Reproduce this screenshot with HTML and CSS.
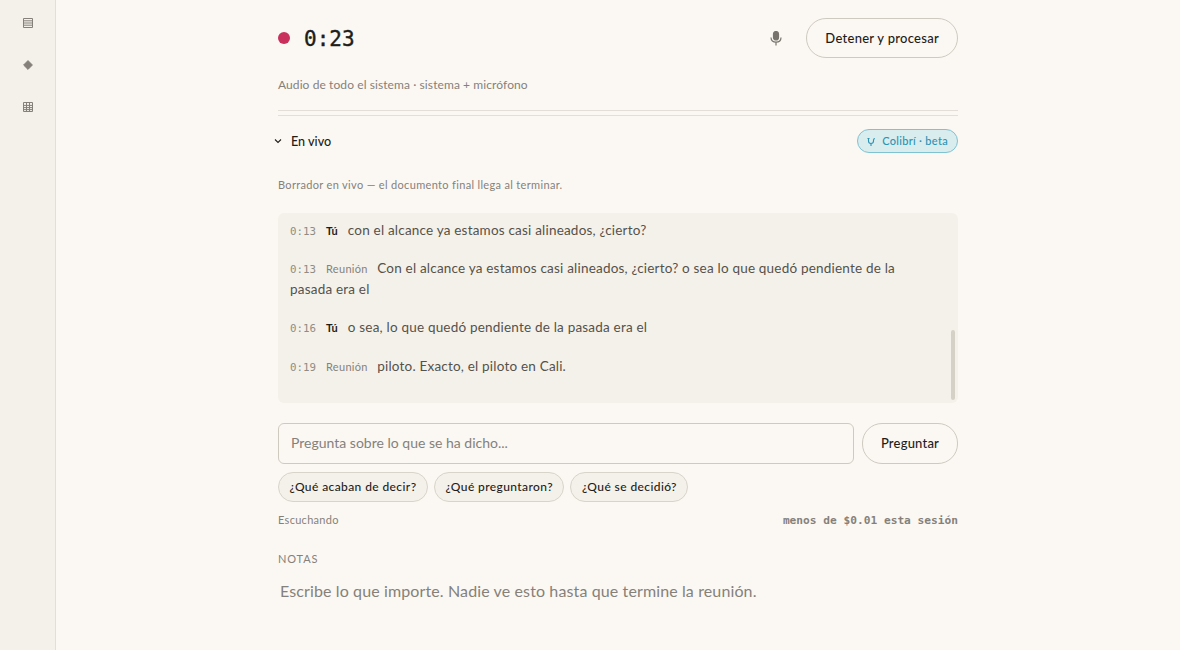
FILE: index.html
```html
<!DOCTYPE html>
<html lang="es">
  <head>
    <meta charset="UTF-8" />
    <meta name="viewport" content="width=device-width, initial-scale=1.0" />
    <title>Grabando</title>
    <link rel="stylesheet" href="styles.css">
  </head>
  <body>
    <aside class="sidebar">
      <svg class="nav-icon" viewBox="0 0 10 10"><path d="M.5.5h9v9h-9zM.5 2.800h9M.5 5h9M.5 7.200h9" /></svg>
      <svg class="nav-icon" viewBox="0 0 10 10"><path class="solid" d="M5 .6 9.400 5 5 9.400.6 5z" /></svg>
      <svg class="nav-icon" viewBox="0 0 10 10"><path d="M.5.5h9v9h-9zM.5 3.400h9M.5 5.600h9M.5 7.600h9M3.500.5v9M6.500.5v9" /></svg>
    </aside>

    <main class="container">
      <header class="rec-bar">
        <span class="rec-dot"></span>
        <span class="timer">0:23</span>
        <svg class="mic" viewBox="0 0 12 15">
          <rect x="3.500" y="0.5" width="5" height="8.500" rx="2.500" />
          <path d="M1 6.500c0 3 2 4.700 5 4.700s5-1.700 5-4.700M6 11.200v3.300" />
        </svg>
        <button class="btn stop">Detener y procesar</button>
      </header>

      <p class="source">Audio de todo el sistema · sistema + micrófono</p>
      <div class="divider"></div>

      <div class="live-row">
        <svg class="chevron" viewBox="0 0 8 6"><path d="M1 1.500 4 4.500 7 1.500" /></svg>
        <span class="live-title">En vivo</span>
        <span class="beta">
          <svg viewBox="0 0 12 12"><path d="M2.500 3.500h2M3.500 3.500v2.500a2.500 2.500 0 0 0 5 0v-1.500M8.500 4.500l1.200-1.200M6 8.500v2.500" /></svg>
          Colibrí · beta
        </span>
      </div>

      <p class="draft-note">Borrador en vivo — el documento final llega al terminar.</p>

      <section class="transcript">
        <p class="line"><span class="time">0:13</span><b class="who me">Tú</b>con el alcance ya estamos casi alineados, ¿cierto?</p>
        <p class="line"><span class="time">0:13</span><b class="who">Reunión</b>Con el alcance ya estamos casi alineados, ¿cierto? o sea lo que quedó pendiente de la pasada era el</p>
        <p class="line"><span class="time">0:16</span><b class="who me">Tú</b>o sea, lo que quedó pendiente de la pasada era el</p>
        <p class="line"><span class="time">0:19</span><b class="who">Reunión</b>piloto. Exacto, el piloto en Cali.</p>
        <div class="scroll-thumb"></div>
      </section>

      <form class="ask">
        <input type="text" placeholder="Pregunta sobre lo que se ha dicho..." />
        <button class="btn" type="button">Preguntar</button>
      </form>

      <div class="chips">
        <button class="chip" type="button">¿Qué acaban de decir?</button>
        <button class="chip" type="button">¿Qué preguntaron?</button>
        <button class="chip" type="button">¿Qué se decidió?</button>
      </div>

      <div class="status">
        <span class="listening">Escuchando</span>
        <span class="cost">menos de $0.01 esta sesión</span>
      </div>

      <h2 class="notes-title">NOTAS</h2>
      <textarea class="notes" placeholder="Escribe lo que importe. Nadie ve esto hasta que termine la reunión."></textarea>
    </main>
  </body>
</html>
```

FILE: styles.css
```css
*,
*::before,
*::after {
  margin: 0;
  padding: 0;
  box-sizing: border-box;
}

body {
  display: flex;
  height: 650px;
  overflow: hidden;
  background: #fbf8f3;
  color: #1f1d1a;
  font-family: "Lato", "Noto Sans", sans-serif;
}

button,
input,
textarea {
  font-family: inherit;
}

.sidebar {
  flex: 0 0 56px;
  display: flex;
  flex-direction: column;
  align-items: center;
  gap: 32px;
  padding-top: 18px;
  background: #f4f1ea;
  border-right: 1px solid #e3dfd6;
}

.nav-icon {
  width: 10px;
  height: 10px;
  fill: none;
  stroke: #85817a;
  stroke-width: 1;
}
.nav-icon .solid {
  fill: #85817a;
}

.container {
  flex: 1;
  display: flex;
  flex-direction: column;
  align-items: stretch;
  padding: 18px 222px 0;
}

.rec-bar {
  display: flex;
  align-items: center;
  height: 40px;
}
.rec-dot {
  width: 12px;
  height: 12px;
  border-radius: 50%;
  background: #c9305c;
  margin-right: 14px;
}
.timer {
  padding-top: 1px;
  font-family: "DejaVu Sans Mono", monospace;
  font-size: 21px;
  font-weight: 400;
  -webkit-text-stroke: 0.4px #1f1d1a;
}
.mic {
  width: 12px;
  height: 15px;
  margin-left: auto;
  margin-right: 24px;
  fill: #78746d;
  stroke: #78746d;
  stroke-width: 1.2;
}
.mic path {
  fill: none;
}

.btn {
  height: 40px;
  padding: 0 18px 1px;
  background: #fbf8f3;
  color: #1f1d1a;
  border: 1px solid #cfcac0;
  border-radius: 20px;
  font-size: 13px;
  font-weight: 500;
  letter-spacing: 0.28px;
}

.source {
  margin-top: 19px;
  height: 16px;
  line-height: 16px;
  font-size: 12px;
  letter-spacing: 0.09px;
  color: #85817a;
}

.divider {
  margin-top: 17px;
  height: 6px;
  border-top: 1px solid #e3dfd6;
  border-bottom: 1px solid #e3dfd6;
}

.live-row {
  display: flex;
  align-items: center;
  height: 24px;
  margin-top: 13px;
}
.chevron {
  width: 8px;
  height: 6px;
  margin-left: -4px;
  margin-right: 9px;
  fill: none;
  stroke: #1f1d1a;
  stroke-width: 1.1;
}
.live-title {
  font-size: 12.600px;
  font-weight: 500;
}
.beta {
  display: flex;
  align-items: center;
  gap: 5px;
  height: 24px;
  margin-left: auto;
  padding: 0 9px 1px 7px;
  background: #d9ecee;
  border: 1px solid #7fc3d3;
  border-radius: 12px;
  color: #2b93b3;
  font-size: 11px;
  font-weight: 500;
  letter-spacing: 0.3px;
}
.beta svg {
  width: 12px;
  height: 12px;
  fill: none;
  stroke: #2b93b3;
  stroke-width: 1.1;
}

.draft-note {
  margin-top: 24px;
  height: 16px;
  line-height: 16px;
  font-size: 11px;
  letter-spacing: 0.33px;
  color: #85817a;
}

.transcript {
  position: relative;
  height: 190px;
  margin-top: 20px;
  padding: 7px 20px 0 12px;
  background: #f4f1ea;
  border-radius: 6px;
  display: flex;
  flex-direction: column;
  gap: 17.200px;
}
.line {
  font-size: 13.500px;
  line-height: 21px;
  letter-spacing: 0.2px;
  color: #55514b;
}
.time {
  font-family: "DejaVu Sans Mono", monospace;
  font-size: 10.800px;
  line-height: 1;
  letter-spacing: 0;
  color: #908c84;
  margin-right: 10px;
}
.who {
  font-size: 11px;
  line-height: 1;
  font-weight: 400;
  letter-spacing: 0.3px;
  color: #85817a;
  margin-right: 9.500px;
}
.who.me {
  font-weight: 700;
  letter-spacing: 0;
  color: #1f1d1a;
  margin-right: 10px;
}
.scroll-thumb {
  position: absolute;
  right: 3px;
  top: 117px;
  width: 4px;
  height: 70px;
  border-radius: 2px;
  background: #d5d1c6;
}

.ask {
  display: flex;
  gap: 8px;
  margin-top: 20px;
}
.ask input {
  flex: 1;
  height: 41px;
  padding: 0 12px 2px;
  background: #fbf8f3;
  border: 1px solid #cfcac0;
  border-radius: 6px;
  font-size: 14px;
}
.ask input::placeholder {
  color: #85817a;
}
.ask .btn {
  width: 96px;
  height: 41px;
  padding: 0 0 2px;
  letter-spacing: 0.2px;
}

.chips {
  display: flex;
  gap: 6px;
  margin-top: 8px;
}
.chip {
  height: 30px;
  padding: 0 10.500px 2px;
  background: #f4f1ea;
  border: 1px solid #d8d4ca;
  border-radius: 15px;
  color: #1f1d1a;
  font-size: 12px;
  font-weight: 500;
  letter-spacing: 0.4px;
}

.status {
  display: flex;
  justify-content: space-between;
  align-items: center;
  height: 16px;
  margin-top: 10px;
  font-size: 11px;
  color: #85817a;
}
.listening {
  letter-spacing: 0.3px;
  padding-bottom: 2px;
}
.cost {
  font-family: "DejaVu Sans Mono", monospace;
  font-weight: 700;
  font-size: 11.200px;
}

.notes-title {
  margin-top: 23px;
  height: 16px;
  line-height: 16px;
  font-size: 11px;
  font-weight: 400;
  letter-spacing: 0.08em;
  color: #85817a;
}

.notes {
  margin-top: 13px;
  height: 60px;
  padding: 0 2px;
  background: transparent;
  border: none;
  resize: none;
  outline: none;
  font-size: 16px;
  line-height: 22px;
  letter-spacing: 0.12px;
}
.notes::placeholder {
  color: #85817a;
}
```
